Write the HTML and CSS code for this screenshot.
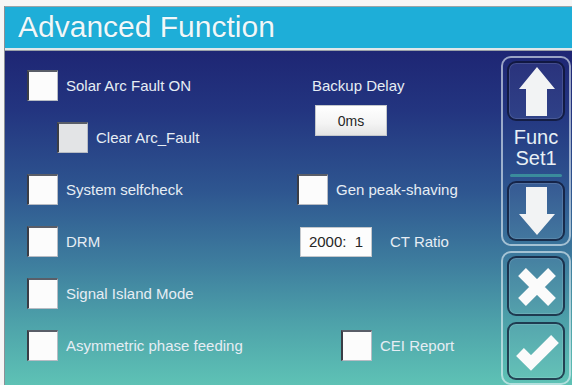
FILE: index.html
```html
<!DOCTYPE html>
<html lang="en">
<head>
  <meta charset="UTF-8">
  <title>Advanced Function</title>
  <link rel="stylesheet" href="styles.css">
</head>
<body>

<div class="screen">
  <header class="title-bar">
    <h1>Advanced Function</h1>
  </header>

  <main class="panel">
    <section class="col col-left">
      <div class="opt"><span class="check"></span><span class="label">Solar Arc Fault ON</span></div>
      <div class="opt opt-sub"><span class="check check-grey"></span><span class="label">Clear Arc_Fault</span></div>
      <div class="opt"><span class="check"></span><span class="label">System selfcheck</span></div>
      <div class="opt"><span class="check"></span><span class="label">DRM</span></div>
      <div class="opt"><span class="check"></span><span class="label">Signal Island Mode</span></div>
      <div class="opt"><span class="check"></span><span class="label">Asymmetric phase feeding</span></div>
    </section>

    <section class="col col-right">
      <div class="opt backup"><span class="label">Backup Delay</span></div>
      <div class="value value-delay">0ms</div>
      <div class="opt gen"><span class="check"></span><span class="label">Gen peak-shaving</span></div>
      <div class="opt ct"><span class="value value-ct">2000:&nbsp; 1</span><span class="label">CT Ratio</span></div>
      <div class="opt cei"><span class="check"></span><span class="label">CEI Report</span></div>
    </section>

    <aside class="side">
      <div class="group">
        <button class="btn">
          <svg viewBox="0 0 54 56"><polygon points="28,4 46,26 38,26 38,53 17,53 17,26 10,26" /></svg>
        </button>
        <div class="func">Func<br>Set1</div>
        <div class="func-bar"></div>
        <button class="btn">
          <svg viewBox="0 0 54 56"><polygon points="17,4 38,4 38,31 46,31 28,52 10,31 17,31" /></svg>
        </button>
      </div>
      <div class="group">
        <button class="btn">
          <svg viewBox="0 0 54 56"><path class="stroke" d="M13 14 L43 44 M43 14 L13 44" /></svg>
        </button>
        <button class="btn">
          <svg viewBox="0 0 54 56"><polyline class="stroke" points="11,28 22,39 46,15" /></svg>
        </button>
      </div>
    </aside>
  </main>
</div>

</body>
</html>
```

FILE: styles.css
```css
body {
  margin: 0;
  background-color: #f6f6f6;
  font-family: "Liberation Sans", Arial, sans-serif;
  overflow: hidden;
}
.screen {
  margin: 6px 0 0 4px;
  border-left: 1px solid #8c9096;
  width: 567px;
  height: 379px;
  overflow: hidden;
}
.title-bar {
  height: 44px;
  box-sizing: border-box;
  border-top: 1px solid #9aa4a8;
  border-bottom: 2px solid #dfe7ea;
  background-color: #1eaed8;
  padding-left: 13px;
}
.title-bar h1 {
  margin: 0;
  font-weight: normal;
  font-size: 30px;
  line-height: 40px;
  color: #f0f8fb;
  text-shadow: 0 0 1px rgba(0, 0, 0, 0.2);
}
.panel {
  display: flex;
  height: 335px;
  border-top: 1px solid #9aa0a8;
  box-sizing: border-box;
  background: linear-gradient(180deg, #1e2674 0%, #233580 18%, #2e5690 42%, #3f809f 65%, #4ea3aa 82%, #5ec2b5 100%);
}
.col {
  display: flex;
  flex-direction: column;
  padding-top: 19px;
}
.col-left {
  width: 270px;
  padding-left: 22px;
  gap: 21px;
}
.col-right {
  width: 200px;
}
.opt {
  display: flex;
  align-items: center;
  height: 31px;
}
.opt-sub {
  padding-left: 30px;
}
.check {
  width: 31px;
  height: 31px;
  box-sizing: border-box;
  margin-right: 8px;
  background-color: #fcfcfc;
  border-left: 2px solid #3a3d46;
  border-top: 2px solid #5a5e68;
  border-right: 1px solid #b8bcc4;
  border-bottom: 1px solid #b8bcc4;
}
.check-grey {
  background-color: #e3e4e6;
}
.label {
  font-size: 15px;
  color: #e6edf4;
}
.backup {
  padding-left: 15px;
}
.value {
  width: 72px;
  height: 31px;
  box-sizing: border-box;
  display: flex;
  align-items: center;
  justify-content: center;
  font-size: 14px;
  color: #262626;
  background: linear-gradient(180deg, #ffffff 0%, #f4f4f4 60%, #e4e4e4 100%);
  border: 1px solid #c4c8cc;
}
.value-delay {
  margin: 4px 0 0 18px;
}
.gen {
  margin-top: 38px;
}
.ct {
  margin-top: 21px;
  padding-left: 3px;
}
.value-ct {
  height: 30px;
  margin-right: 18px;
  background: #fdfdfd;
  font-size: 15px;
}
.cei {
  margin-top: 73px;
  padding-left: 44px;
}
.side {
  margin-left: auto;
  margin-right: 1px;
  width: 70px;
  padding-top: 5px;
  display: flex;
  flex-direction: column;
  gap: 5px;
}
.group {
  display: flex;
  flex-direction: column;
  box-sizing: border-box;
  padding: 3px 4px;
  border: 2px solid rgba(235, 245, 250, 0.6);
  border-radius: 10px;
  gap: 6px;
}
.btn {
  width: 58px;
  height: 60px;
  padding: 0;
  box-sizing: border-box;
  background-color: rgba(255, 255, 255, 0.05);
  border: 2px solid rgba(8, 14, 42, 0.7);
  border-radius: 9px;
  box-shadow: inset 0 0 0 1px rgba(255, 255, 255, 0.12);
}
.btn svg {
  display: block;
  width: 54px;
  height: 56px;
}
.btn polygon {
  fill: #f2f3f4;
}
.btn .stroke {
  fill: none;
  stroke: #fbfbfb;
  stroke-width: 11;
}
.group .btn + .btn {
  height: 58px;
}
.func {
  font-size: 20px;
  line-height: 21px;
  text-align: center;
  color: #e8f0f5;
}
.func-bar {
  height: 3px;
  margin: -1px 3px -2px;
  border-radius: 2px;
  background-color: #3a8c9c;
}
```
